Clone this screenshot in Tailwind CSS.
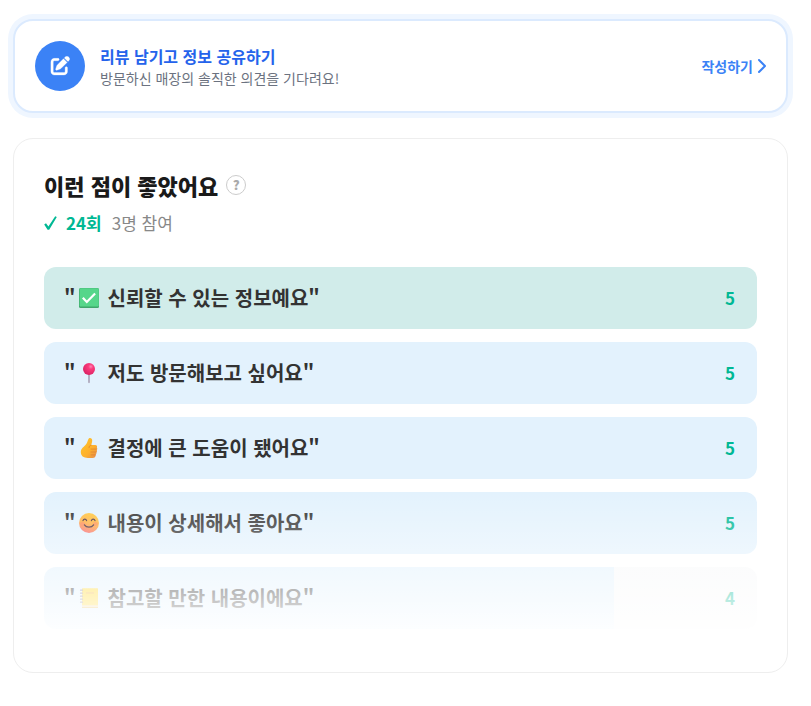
<!DOCTYPE html>
<html lang="ko">
<head>
    <meta charset="UTF-8">
    <meta name="viewport" content="width=device-width, initial-scale=1.0">
    <title>리뷰</title>
    <script src="https://cdn.jsdelivr.net/npm/@tailwindcss/browser@4"></script>
</head>
<body class="bg-white font-['Noto_Sans_CJK_KR',sans-serif] text-[#333]">

    <main class="flex flex-col gap-[25px] pt-[19px] pb-8 pl-[13px] pr-[23px]">

        <!-- Write a review -->
        <a href="#" class="flex items-center rounded-[20px] border-2 border-[#dbeafe] bg-white p-5 ring-5 ring-[#eff6ff]">
            <span class="flex size-[50px] shrink-0 items-center justify-center rounded-full bg-[#3b82f6]">
                <svg class="size-5" viewBox="-24 0 540 540" fill="#fff" stroke="#fff" stroke-width="8" aria-hidden="true">
                    <path d="M471.6 21.7c-21.9-21.9-57.3-21.9-79.2 0L362.3 51.7l97.9 97.9 30.1-30.1c21.9-21.9 21.9-57.3 0-79.2L471.6 21.7zm-299.2 220c-6.1 6.1-10.8 13.6-13.5 21.9l-29.6 88.8c-2.9 8.6-.6 18.1 5.8 24.6s15.9 8.7 24.6 5.8l88.8-29.6c8.2-2.7 15.7-7.4 21.9-13.5L437.7 172.3 339.7 74.3 172.4 241.7zM96 64C43 64 0 107 0 160V416c0 53 43 96 96 96H352c53 0 96-43 96-96V320c0-17.7-14.3-32-32-32s-32 14.3-32 32v96c0 17.7-14.3 32-32 32H96c-17.7 0-32-14.3-32-32V160c0-17.7 14.3-32 32-32h96c17.7 0 32-14.3 32-32s-14.3-32-32-32H96z"/>
                </svg>
            </span>
            <span class="ml-[15px] flex grow flex-col">
                <strong class="text-base leading-6 font-bold text-[#2563eb]">리뷰 남기고 정보 공유하기</strong>
                <span class="text-sm leading-5 text-[#6b7280]">방문하신 매장의 솔직한 의견을 기다려요!</span>
            </span>
            <span class="flex items-center gap-1 text-sm font-bold text-[#3b82f6]">
                작성하기
                <svg class="h-4 w-[9px]" viewBox="0 0 9 16" fill="none" stroke="currentColor" stroke-width="2" stroke-linecap="round" stroke-linejoin="round" aria-hidden="true">
                    <path d="M2 2 8 8 2 14"/>
                </svg>
            </span>
        </a>

        <!-- Keyword votes -->
        <section class="rounded-[20px] border border-[#eee] bg-white p-[30px]">
            <div class="flex items-center gap-2">
                <h2 class="text-[22px] leading-8 font-black text-[#1a1a1a]">이런 점이 좋았어요</h2>
                <button type="button" aria-label="도움말" class="flex size-5 items-center justify-center rounded-full border border-[#ccc] text-[13px] font-black text-[#aaa]">?</button>
            </div>
            <p class="mt-[6px] flex items-center text-[17px] leading-8 text-[#888]">
                <svg class="mr-[9px] h-4 w-[13px]" viewBox="0 0 13 16" aria-hidden="true">
                    <path d="M.2 9.4 2 8.200 4.400 11.500 11.200 1.200 12.800 2 5.200 14.800 3.600 14.800z" fill="#00b894"/>
                </svg>
                <strong class="mr-[10px] font-bold text-[#00b894]">24회</strong>
                3명 참여
            </p>

            <div class="relative mt-7">
                <ul class="flex flex-col gap-[13px] pb-[13px] text-[20px] font-bold">
                    <li class="flex h-[62px] items-center rounded-xl bg-[#d1ecea] pl-5 pr-[22px]">
                        <span>"</span>
                        <svg class="mr-2 ml-0.5 size-[22px]" viewBox="0 0 22 22" aria-hidden="true">
                            <rect x="1" y="1" width="20" height="20" rx="1.5" fill="#3fa76b"/>
                            <rect x="1.6" y="1.2" width="19.2" height="18.4" rx="1.2" fill="#56d68a"/>
                            <path d="m4.8 10.8 4 4.2 8.3-8.6" fill="none" stroke="#fff" stroke-width="2.2"/>
                        </svg>
                        <span class="grow">신뢰할 수 있는 정보예요"</span>
                        <span class="text-[17px] text-[#00b894]">5</span>
                    </li>
                    <li class="flex h-[62px] items-center rounded-xl bg-[#e3f2fd] pl-5 pr-[22px]">
                        <span>"</span>
                        <svg class="mr-2 ml-0.5 size-[22px]" viewBox="0 0 22 22" aria-hidden="true">
                            <defs>
                                <radialGradient id="pin" cx=".65" cy=".3" r=".7">
                                    <stop offset="0" stop-color="#ff85b5"/>
                                    <stop offset=".3" stop-color="#fb3c7c"/>
                                    <stop offset="1" stop-color="#dc2466"/>
                                </radialGradient>
                            </defs>
                            <path d="M10.2 11h1.6v9.4l-.8.8-.8-.8z" fill="#a8a0b5"/>
                            <circle cx="11" cy="7" r="6" fill="url(#pin)"/>
                        </svg>
                        <span class="grow">저도 방문해보고 싶어요"</span>
                        <span class="text-[17px] text-[#00b894]">5</span>
                    </li>
                    <li class="flex h-[62px] items-center rounded-xl bg-[#e3f2fd] pl-5 pr-[22px]">
                        <span>"</span>
                        <svg class="mr-2 ml-0.5 size-[22px]" viewBox="0 0 22 22" aria-hidden="true">
                            <defs>
                                <linearGradient id="thumb" x1="0" y1="0" x2="1" y2="1">
                                    <stop offset="0" stop-color="#ffc62b"/>
                                    <stop offset=".6" stop-color="#fdb02d"/>
                                    <stop offset="1" stop-color="#e58a50"/>
                                </linearGradient>
                            </defs>
                            <path d="M11.600 1c1.700-.2 2.600 1 2.600 2.600 0 1.800-.7 3.200-1 4.400h4c1.600 0 2.200 1.200 1.700 2.400.5.8.5 1.800-.1 2.500.4.9.2 1.900-.4 2.500.2 1-.1 1.800-.7 2.300.1 2-1 3.300-3.200 3.300H10c-4.600 0-7.200-2-7.200-5.900C2.800 11 6.300 9.900 8.600 6.500 9.800 4.700 10 1.300 11.600 1z" fill="url(#thumb)"/>
                            <path d="M13 12.100h5M13 15h5M13 17.900h4.400M13.200 8.200c-1.900.4-2.300 1.400-2.100 2.400" fill="none" stroke="#dd8130" stroke-width=".7" stroke-linecap="round"/>
                        </svg>
                        <span class="grow">결정에 큰 도움이 됐어요"</span>
                        <span class="text-[17px] text-[#00b894]">5</span>
                    </li>
                    <li class="flex h-[62px] items-center rounded-xl bg-[#e3f2fd] pl-5 pr-[22px]">
                        <span>"</span>
                        <svg class="mr-2 ml-0.5 size-[22px]" viewBox="0 0 22 22" aria-hidden="true">
                            <defs>
                                <linearGradient id="face" x1=".6" y1="0" x2=".3" y2="1">
                                    <stop offset="0" stop-color="#ffc83d"/>
                                    <stop offset=".5" stop-color="#ffae42"/>
                                    <stop offset="1" stop-color="#f76a72"/>
                                </linearGradient>
                            </defs>
                            <circle cx="11" cy="11" r="10" fill="url(#face)"/>
                            <ellipse cx="4.6" cy="12" rx="2.5" ry="2" fill="#ff7a60" opacity=".5"/>
                            <ellipse cx="17.4" cy="12" rx="2.5" ry="2" fill="#ff7a60" opacity=".5"/>
                            <path d="M5 8.600c.6-2 3-2 3.600 0M13.400 8.600c.6-2 3-2 3.600 0M6.400 12.800c2 3 7.200 3 9.200 0" fill="none" stroke="#4a3040" stroke-width="1.200" stroke-linecap="round"/>
                        </svg>
                        <span class="grow">내용이 상세해서 좋아요"</span>
                        <span class="text-[17px] text-[#00b894]">5</span>
                    </li>
                    <li class="flex h-[62px] items-center rounded-xl bg-linear-to-r from-[#e3f2fd] from-80% to-[#f8f9fa] to-80% pl-5 pr-[22px]">
                        <span>"</span>
                        <svg class="mr-2 ml-0.5 size-[22px]" viewBox="0 0 22 22" aria-hidden="true">
                            <rect x="4" y="17" width="16" height="4" fill="#e6b94d"/>
                            <rect x="4" y="18.5" width="16" height="1" fill="#fff"/>
                            <rect x="4" y="1.2" width="16" height="17" rx=".5" fill="#ffd92e"/>
                            <rect x="8" y="5" width="8" height="2" fill="#f5bd3a"/>
                            <path d="M2.500 3.200h2M2.500 6.200h2M2.500 9.200h2M2.500 12.200h2M2.500 15.200h2" stroke="#8f8799" stroke-width="1.200" stroke-linecap="round"/>
                        </svg>
                        <span class="grow">참고할 만한 내용이에요"</span>
                        <span class="text-[17px] text-[#00b894]">4</span>
                    </li>
                </ul>
                <!-- Fade over the end of the list -->
                <div class="pointer-events-none absolute inset-x-0 bottom-0 h-[150px] bg-linear-to-b from-white/0 to-white"></div>
            </div>
        </section>
    </main>

</body>
</html>
